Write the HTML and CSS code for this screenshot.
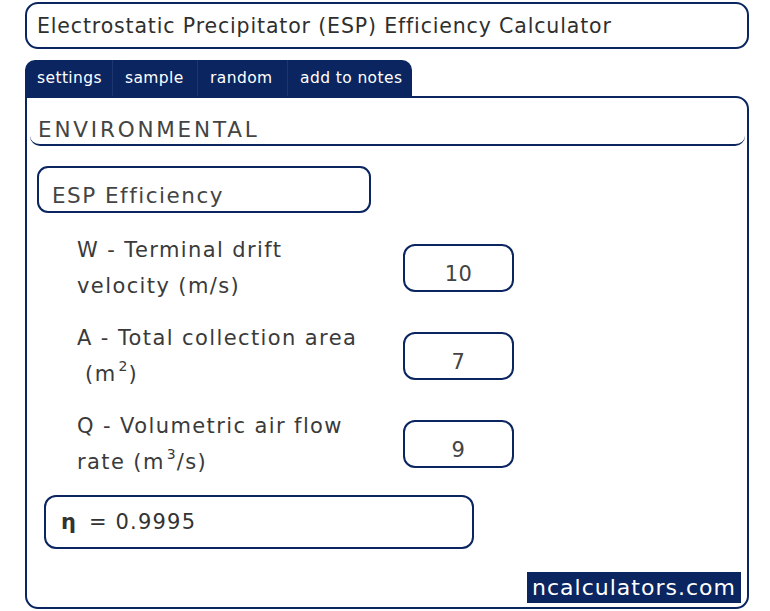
FILE: index.html
```html
<!DOCTYPE html>
<html>
<head>
<meta charset="utf-8">
<link rel="stylesheet" href="styles.css">
</head>
<body>
<div class="page">
  <div class="title">Electrostatic Precipitator (ESP) Efficiency Calculator</div>
  <div class="tabs">
    <div class="tab t1">settings</div>
    <div class="tab t2">sample</div>
    <div class="tab t3">random</div>
    <div class="tab t4">add to notes</div>
  </div>
  <div class="panel">
    <div class="category">ENVIRONMENTAL</div>
    <div class="calc-name">ESP Efficiency</div>
    <div class="rows">
      <div class="row">
        <div class="label">W - Terminal drift velocity (m/s)</div>
        <div class="input">10</div>
      </div>
      <div class="row">
        <div class="label">A - Total collection area <span class="unit">&nbsp;(m<sup>2</sup>)</span></div>
        <div class="input">7</div>
      </div>
      <div class="row">
        <div class="label">Q - Volumetric air flow rate (m<sup>3</sup>/s)</div>
        <div class="input">9</div>
      </div>
    </div>
    <div class="result"><b class="sym">η</b><span class="eq">=</span><span class="val">0.9995</span></div>
    <div class="footer"><div class="brand">ncalculators.com</div></div>
  </div>
</div>
</body>
</html>
```

FILE: styles.css
```css
* { box-sizing: border-box; }
html, body { margin: 0; padding: 0; background: #fff; }
body {
  font-family: "DejaVu Sans", "Noto Sans", sans-serif;
  color: #3a3a3a;
}
.page {
  width: 770px;
  height: 611px;
  padding: 2px 21px 0 25px;
}
.title {
  height: 47px;
  border: 2px solid #0b2560;
  border-radius: 13px;
  font-size: 20.5px;
  letter-spacing: 0.85px;
  padding: 0 0 0 10px;
  display: flex;
  align-items: center;
  color: #2f2f2f;
}
.tabs {
  margin-top: 11px;
  width: 387px;
  height: 36px;
  background: #0b2560;
  border-radius: 10px 10px 0 0;
  display: flex;
  align-items: center;
}
.tab {
  color: #fff;
  font-size: 15.5px;
  letter-spacing: 0.4px;
  height: 100%;
  display: flex;
  align-items: center;
  padding-left: 12px;
  border-right: 1px solid #1d3670;
}
.t1 { width: 88px; }
.t2 { width: 85px; }
.t3 { width: 90px; }
.t4 { width: 124px; border-right: none; }
.panel {
  height: 513px;
  border: 2px solid #0b2560;
  border-radius: 0 13px 13px 13px;
  display: flex;
  flex-direction: column;
}
.category {
  height: 48px;
  margin: 0 2px 0 3px;
  padding: 20px 0 0 8px;
  font-size: 21.5px;
  letter-spacing: 2.8px;
  color: #444;
  border-bottom: 2px solid #0b2560;
  border-radius: 0 0 10px 10px;
  line-height: 24px;
}
.calc-name {
  margin: 20px 0 0 10px;
  width: 334px;
  height: 47px;
  border: 2px solid #0b2560;
  border-radius: 11px;
  font-size: 21.5px;
  letter-spacing: 1.5px;
  color: #444;
  padding: 16px 0 0 13px;
  line-height: 24px;
}
.rows {
  margin-top: 19px;
  display: flex;
  flex-direction: column;
  gap: 16px;
}
.row {
  display: flex;
  align-items: center;
  height: 72px;
  padding-left: 50px;
}
.label {
  width: 300px;
  font-size: 21px;
  letter-spacing: 1.4px;
  line-height: 36px;
  color: #3a3a3a;
}
.label sup {
  display: inline-block;
  font-size: 14px;
  line-height: 14px;
  vertical-align: 10px;
  margin: 0 1px 0 2px;
  letter-spacing: 0;
}
.input {
  margin-left: 26px;
  width: 111px;
  height: 48px;
  border: 2px solid #0b2560;
  border-radius: 12px;
  font-size: 21px;
  color: #444;
  text-align: center;
  padding-top: 16px;
  line-height: 24px;
  letter-spacing: 0.5px;
}
.result {
  margin: 15px 0 0 17px;
  width: 430px;
  height: 54px;
  border: 2px solid #0b2560;
  border-radius: 12px;
  display: flex;
  align-items: center;
  padding-left: 15px;
  font-size: 21px;
  color: #333;
}
.sym { font-weight: bold; }
.eq { margin: 0 9px 0 13px; }
.val { letter-spacing: 1.2px; }
.footer {
  margin-top: auto;
  display: flex;
  justify-content: flex-end;
  padding: 0 6px 4px 0;
}
.brand {
  background: #0b2560;
  color: #fff;
  font-size: 22px;
  letter-spacing: 1px;
  height: 31px;
  width: 214px;
  display: flex;
  align-items: center;
  justify-content: center;
}
```
